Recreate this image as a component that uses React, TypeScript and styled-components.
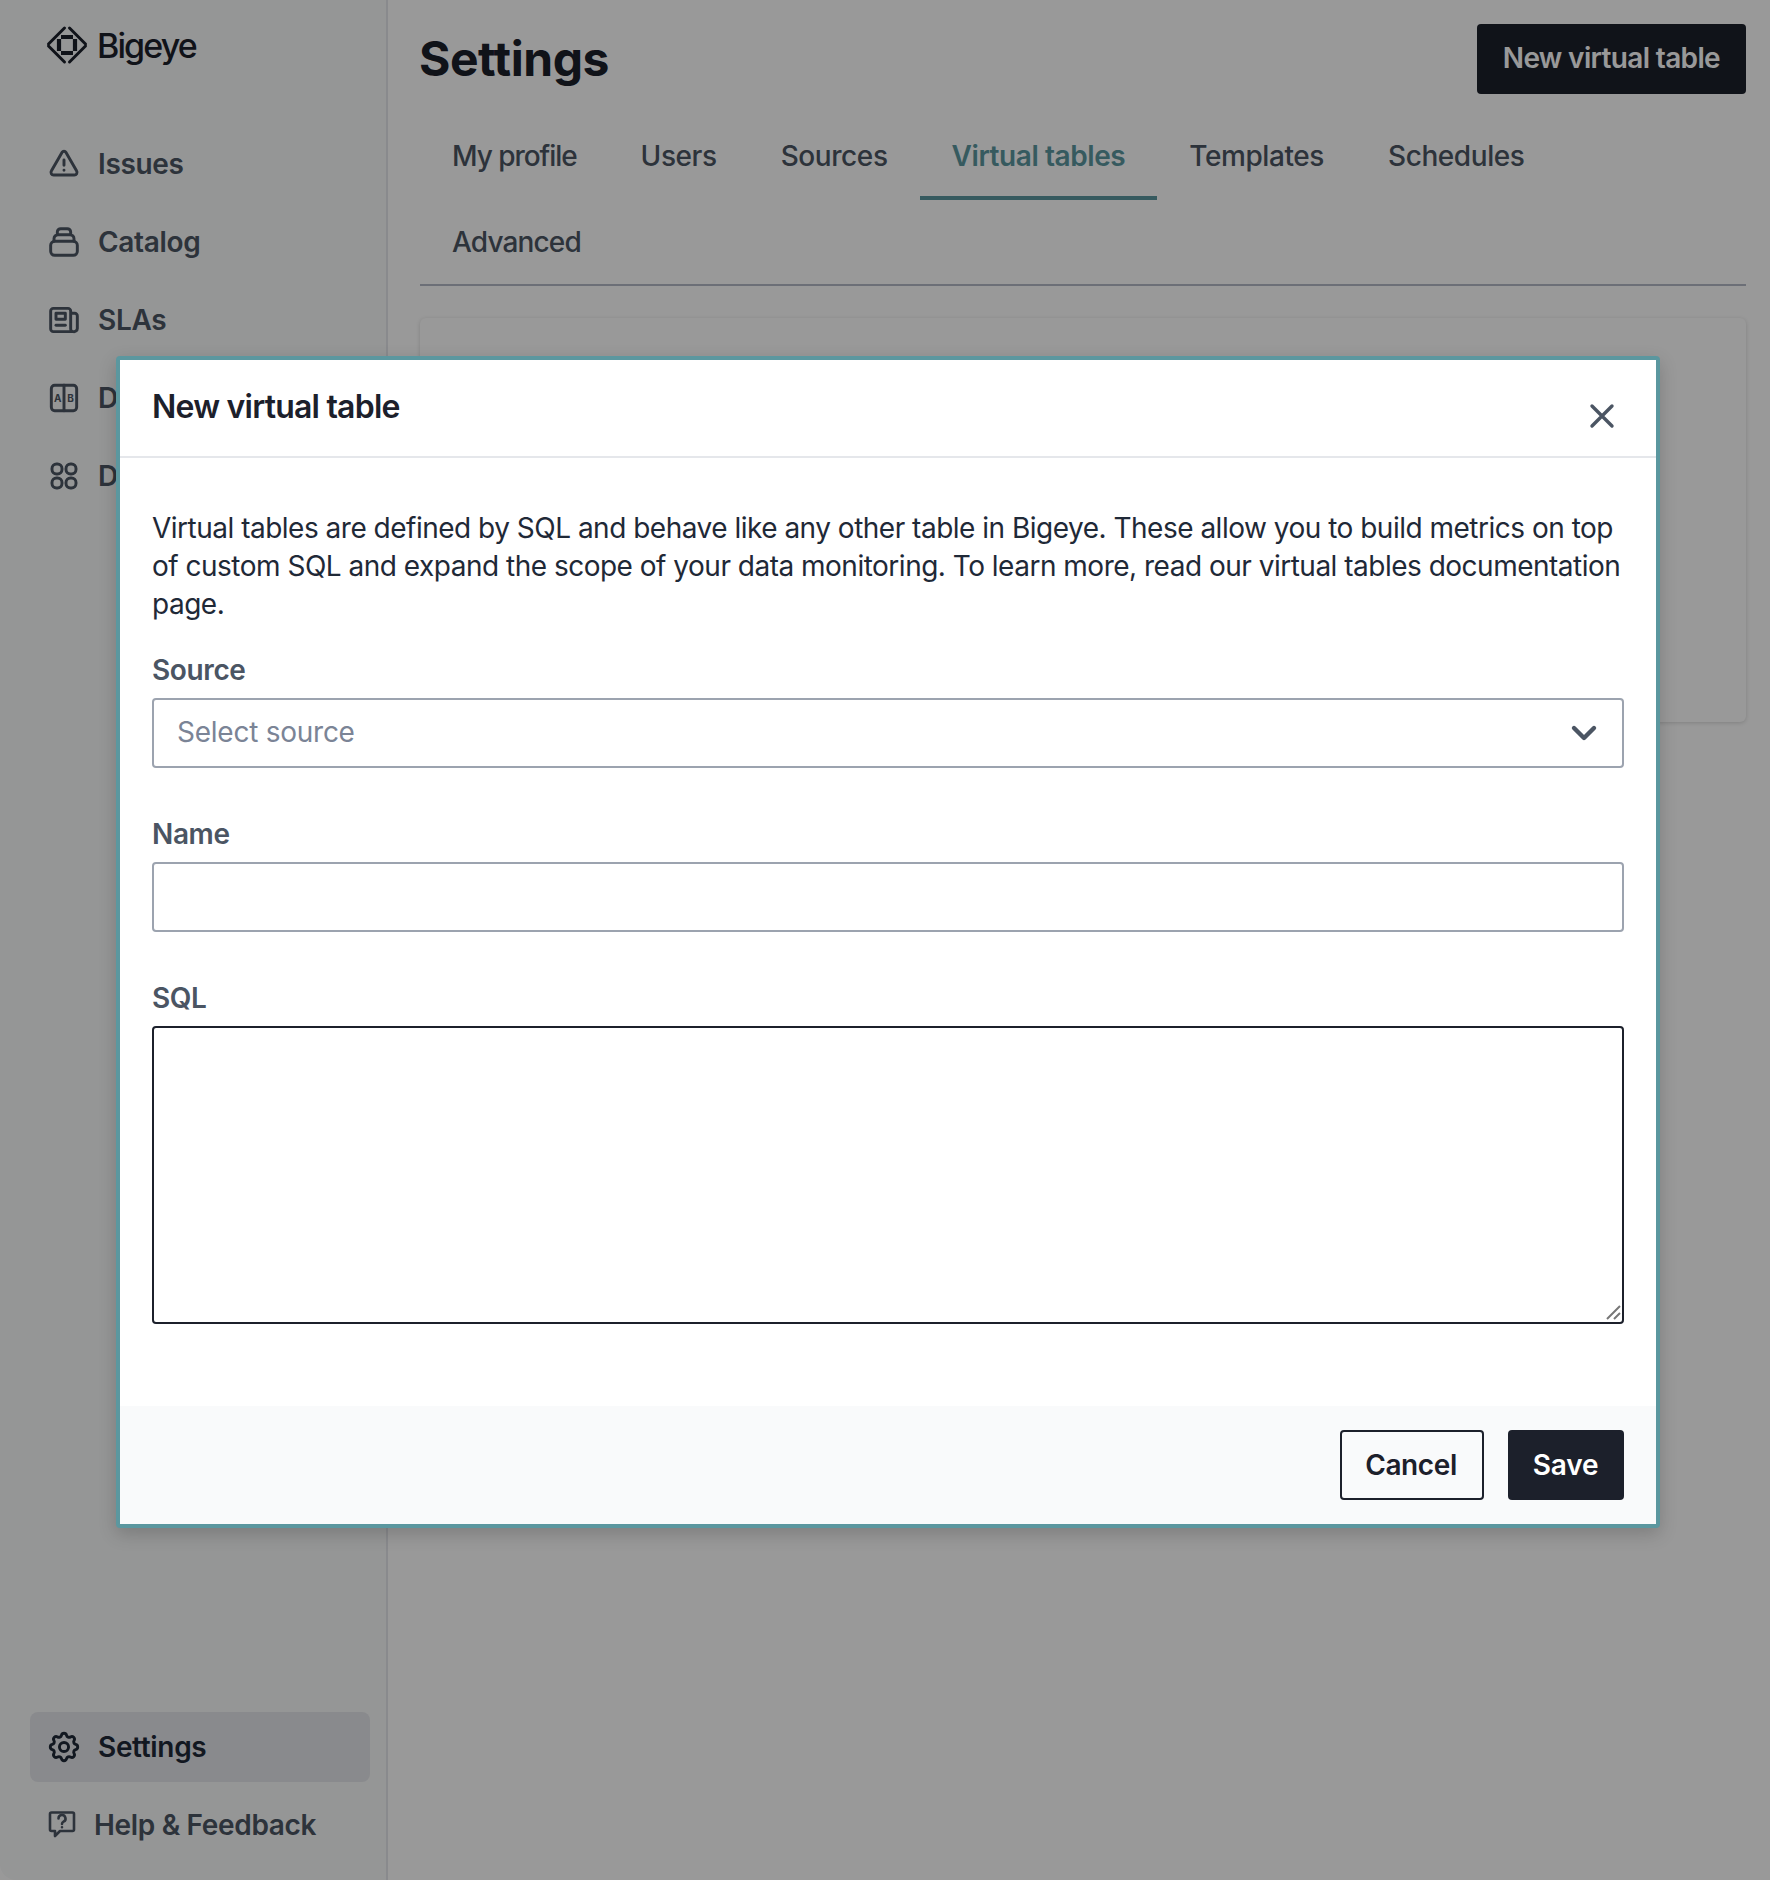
import React from "react";
import styled, { createGlobalStyle } from "styled-components";

const Global = createGlobalStyle`
  html, body { margin: 0; padding: 0; background: #fff; }
  * { box-sizing: border-box; }
  body { font-family: Inter, "Liberation Sans", sans-serif; color: #1f2937; }
`;

const Page = styled.div`
  width: 1770px; height: 1880px; display: flex; overflow: hidden; position: relative;
  background: #fff;
`;
const Sidebar = styled.aside`
  width: 388px; flex: none; height: 100%; display: flex; flex-direction: column;
  background: #f9fafb; border-right: 2px solid #e5e7eb;
  border-bottom-left-radius: 16px; padding: 24px 16px 20px 30px;
`;
const Logo = styled.div`display: flex; align-items: center; gap: 9px; height: 42px; margin-left: 16px; color: #1c202b;`;
const Wordmark = styled.span`font-size: 34px; font-weight: 500; letter-spacing: -1.9px; line-height: 42px; padding-top: 1px;`;
const Nav = styled.nav`display: flex; flex-direction: column; gap: 8px; margin-top: 63px;`;
const FootNav = styled(Nav)`margin-top: auto;`;
const NavItem = styled.a<{ $active?: boolean }>`
  display: flex; align-items: center; height: 70px; padding: 0 0 1px 18px; gap: 18px; border-radius: 8px;
  font-size: 28px; font-weight: 600; line-height: 38px; letter-spacing: -0.33px;
  color: ${p => p.$active ? "#1f2937" : "#4b5563"};
  background: ${p => p.$active ? "#e5e7eb" : "transparent"};
`;
const IconSvg = styled.svg<{ $size?: number; $stroke?: number }>`
  width: ${p => p.$size ?? 32}px; height: ${p => p.$size ?? 32}px; flex: none; fill: none; stroke: currentColor;
  stroke-width: ${p => p.$stroke ?? 2.2}; stroke-linecap: round; stroke-linejoin: round;
`;
const IconLabel = styled.text`font-family: Inter, sans-serif; font-size: 7.5px; font-weight: 700; fill: currentColor; stroke: none; text-anchor: middle;`;

const Main = styled.main`flex: 1; min-width: 0; padding: 24px 24px 0 32px; display: flex; flex-direction: column;`;
const Header = styled.header`display: flex; justify-content: space-between; align-items: center; height: 70px;`;
const Title = styled.h1`margin: 0; font-size: 48px; line-height: 70px; font-weight: 700; color: #1c202b; letter-spacing: -0.45px; margin-left: -1px;`;
const PrimaryButton = styled.button`
  height: 70px; padding: 0 26px 2px; border: 0; border-radius: 4px; background: #1c202b; color: #fff;
  font: 600 28px/38px Inter, sans-serif; letter-spacing: -0.65px;
`;
const Tabs = styled.div`display: flex; flex-wrap: wrap; margin-top: 20px; box-shadow: inset 0 -2px 0 #b4bac6;`;
const Tab = styled.a<{ $active?: boolean; $spacing?: number }>`
  height: 86px; padding: 23px 32px 0; border-bottom: 4px solid ${p => p.$active ? "#5b979f" : "transparent"};
  font-size: 28px; line-height: 38px; font-weight: ${p => p.$active ? 600 : 500};
  color: ${p => p.$active ? "#5b979f" : "#4b5563"}; letter-spacing: ${p => p.$spacing ?? -0.42}px;
`;
const EmptyCard = styled.section`
  margin-top: 32px; height: 404px; background: #fff; border-radius: 6px;
  box-shadow: 0 1px 4px rgba(0,0,0,.16);
`;
const Overlay = styled.div`position: absolute; inset: 0; background: rgba(0,0,0,.4);`;
const Modal = styled.div`
  position: absolute; left: 116px; top: 356px; width: 1544px; height: 1172px;
  background: #fff; border: 4px solid #5b979f; border-radius: 4px; display: flex; flex-direction: column;
  box-shadow: 0 6px 18px rgba(0,0,0,.18);
`;
const ModalHeader = styled.div`
  height: 98px; flex: none; display: flex; justify-content: space-between; padding: 27px 32px 0;
  border-bottom: 2px solid #e5e7eb;
`;
const ModalTitle = styled.h2`margin: 0; font-size: 32px; line-height: 40px; font-weight: 600; color: #1c202b; letter-spacing: -0.78px;`;
const CloseSvg = styled.svg`width: 36px; height: 36px; margin: 11px 4px 0 0; fill: none; stroke: #4b5563; stroke-width: 3.4; stroke-linecap: round;`;
const ModalBody = styled.div`flex: 1; padding: 51px 32px 0; display: flex; flex-direction: column;`;
const Intro = styled.p`margin: 0; font-size: 28px; line-height: 38px; color: #1f2937; font-weight: 400; letter-spacing: -0.5px;`;
const Field = styled.div`display: flex; flex-direction: column; margin-bottom: 47px;`;
const FirstField = styled(Field)`margin-top: 28px;`;
const Label = styled.label`font-size: 28px; line-height: 38px; font-weight: 600; color: #4b5563; margin-bottom: 9px; letter-spacing: -0.38px;`;
const SelectBox = styled.div`
  height: 70px; border: 2px solid #9ca3af; border-radius: 4px; display: flex; align-items: center;
  justify-content: space-between; padding: 0 24px 2px 23px; font-size: 28px; color: #7b8496; letter-spacing: -0.25px;
`;
const Chevron = styled.svg`width: 28px; height: 28px; margin-top: 2px; fill: none; stroke: #4b5563; stroke-width: 4.4; stroke-linecap: round; stroke-linejoin: round;`;
const TextInput = styled.input`height: 70px; border: 2px solid #9ca3af; border-radius: 4px; background: #fff; outline: 0;`;
const SqlWrap = styled.div`position: relative; display: flex;`;
const SqlArea = styled.textarea`flex: 1; height: 298px; border: 2px solid #1c202b; border-radius: 4px; background: #fff; outline: 0; resize: none;`;
const Grip = styled.svg`position: absolute; right: 3px; bottom: 4px; width: 15px; height: 15px; fill: none; stroke: #777; stroke-width: 2;`;
const Footer = styled.div`
  height: 118px; flex: none; background: #f9fafb; display: flex; justify-content: flex-end; align-items: flex-start;
  gap: 24px; padding: 24px 32px 0;
`;
const CancelButton = styled.button`
  height: 70px; width: 144px; padding: 0 2px 1px 0; border: 2px solid #1c202b; border-radius: 4px; background: transparent; color: #1c202b;
  font: 600 28px/38px Inter, sans-serif; letter-spacing: -0.4px;
`;
const SaveButton = styled.button`
  height: 70px; width: 116px; padding: 0 1px 1px 0; border: 0; border-radius: 4px; background: #1c202b; color: #fff;
  font: 600 28px/38px Inter, sans-serif; letter-spacing: -0.2px;
`;

export default function App() {
  return (
    <Page>
      <Global />
      <Sidebar>
        <Logo>
          <svg width="42" height="42" viewBox="0 0 42 42" fill="none" stroke="currentColor" strokeWidth="3">
            <path d="M2.5 20 18.5 4M23.500 4l16 16M2.500 22l16 16M39.500 22l-16 16" strokeLinecap="round" />
            <path d="M13 15v12M29 15v12M15 13h12M15 29h12" strokeWidth="4.2" />
          </svg>
          <Wordmark>Bigeye</Wordmark>
        </Logo>
        <Nav>
          <NavItem>
            <IconSvg viewBox="0 0 24 24"><path d="M10.600 3.200 2.500 17.300c-.8 1.300.2 2.900 1.700 2.900h15.600c1.500 0 2.500-1.600 1.700-2.900L13.400 3.200c-.6-1.100-2.200-1.100-2.800 0Z" /><path d="M12 9v4M12 16.600v.1" /></IconSvg>Issues
          </NavItem>
          <NavItem>
            <IconSvg viewBox="0 0 24 24"><rect x="2" y="11.500" width="20" height="10.500" rx="3" /><path d="M4.500 11.500v-2a3 3 0 0 1 3-3h9a3 3 0 0 1 3 3v2M7 6.500v-2A2.500 2.500 0 0 1 9.500 2h5A2.500 2.500 0 0 1 17 4.500v2" /></IconSvg>Catalog
          </NavItem>
          <NavItem>
            <IconSvg viewBox="0 0 24 24"><path d="M19 20.700H4a2 2 0 0 1-2-2V5.300a2 2 0 0 1 2-2h11a2 2 0 0 1 2 2v13.400a2 2 0 0 0 2 2 2.500 2.500 0 0 0 3-2.400V9a2 2 0 0 0-2-2h-3" /><rect x="6" y="7" width="7" height="4.500" /><path d="M6 16h7" /></IconSvg>SLAs
          </NavItem>
          <NavItem>
            <IconSvg viewBox="0 0 24 24"><rect x="2.500" y="2.500" width="19" height="19" rx="2.500" /><path d="M12 2.500v19" /><IconLabel x="7.200" y="15">A</IconLabel><IconLabel x="16.800" y="15">B</IconLabel></IconSvg>Deltas
          </NavItem>
          <NavItem>
            <IconSvg viewBox="0 0 24 24"><rect x="3" y="3" width="7.500" height="7.500" rx="3.400" /><rect x="13.500" y="3" width="7.500" height="7.500" rx="3.400" /><rect x="3" y="13.500" width="7.500" height="7.500" rx="3.400" /><rect x="13.500" y="13.500" width="7.500" height="7.500" rx="3.400" /></IconSvg>Dashboard
          </NavItem>
        </Nav>
        <FootNav>
          <NavItem $active>
            <IconSvg $stroke={1.9} viewBox="1.5 1.5 21 21"><path d="M10.325 4.317c.426-1.756 2.924-1.756 3.35 0a1.724 1.724 0 0 0 2.573 1.066c1.543-.94 3.31.826 2.37 2.37a1.724 1.724 0 0 0 1.065 2.572c1.756.426 1.756 2.924 0 3.35a1.724 1.724 0 0 0-1.066 2.573c.94 1.543-.826 3.31-2.37 2.37a1.724 1.724 0 0 0-2.572 1.065c-.426 1.756-2.924 1.756-3.35 0a1.724 1.724 0 0 0-2.573-1.066c-1.543.94-3.31-.826-2.37-2.37a1.724 1.724 0 0 0-1.065-2.572c-1.756-.426-1.756-2.924 0-3.35a1.724 1.724 0 0 0 1.066-2.573c-.94-1.543.826-3.31 2.37-2.37.996.608 2.296.07 2.572-1.065Z" /><circle cx="12" cy="12" r="3" /></IconSvg>Settings
          </NavItem>
          <NavItem>
            <IconSvg $size={28} $stroke={2.6} viewBox="0 0 28 28"><path d="M3.500 1.500h21A1.500 1.500 0 0 1 26 3v15.500a1.500 1.500 0 0 1-1.500 1.500H12l-5 5v-5H3.500A1.500 1.500 0 0 1 2 18.500V3a1.500 1.500 0 0 1 1.500-1.500Z" /><path d="M10.500 7.500a3.500 3.500 0 1 1 5 3.200c-1 .5-1.500 1.100-1.500 2.300M14 16.200v.1" /></IconSvg>Help &amp; Feedback
          </NavItem>
        </FootNav>
      </Sidebar>
      <Main>
        <Header>
          <Title>Settings</Title>
          <PrimaryButton>New virtual table</PrimaryButton>
        </Header>
        <Tabs>
          <Tab $spacing={-1.05}>My profile</Tab>
          <Tab>Users</Tab>
          <Tab>Sources</Tab>
          <Tab $active>Virtual tables</Tab>
          <Tab>Templates</Tab>
          <Tab>Schedules</Tab>
          <Tab $spacing={-0.85}>Advanced</Tab>
        </Tabs>
        <EmptyCard />
      </Main>
      <Overlay />
      <Modal>
        <ModalHeader>
          <ModalTitle>New virtual table</ModalTitle>
          <CloseSvg viewBox="0 0 36 36"><path d="M8 8l20 20M28 8 8 28" /></CloseSvg>
        </ModalHeader>
        <ModalBody>
          <Intro>Virtual tables are defined by SQL and behave like any other table in Bigeye. These allow you to build metrics on top of custom SQL and expand the scope of your data monitoring. To learn more, read our virtual tables documentation page.</Intro>
          <FirstField>
            <Label>Source</Label>
            <SelectBox>Select source<Chevron viewBox="0 0 28 28"><path d="M4 9l10 10L24 9" /></Chevron></SelectBox>
          </FirstField>
          <Field>
            <Label>Name</Label>
            <TextInput />
          </Field>
          <Field>
            <Label>SQL</Label>
            <SqlWrap>
              <SqlArea />
              <Grip viewBox="0 0 15 15"><path d="M14 1 1 14M14 8l-6 6" /></Grip>
            </SqlWrap>
          </Field>
        </ModalBody>
        <Footer>
          <CancelButton>Cancel</CancelButton>
          <SaveButton>Save</SaveButton>
        </Footer>
      </Modal>
    </Page>
  );
}
